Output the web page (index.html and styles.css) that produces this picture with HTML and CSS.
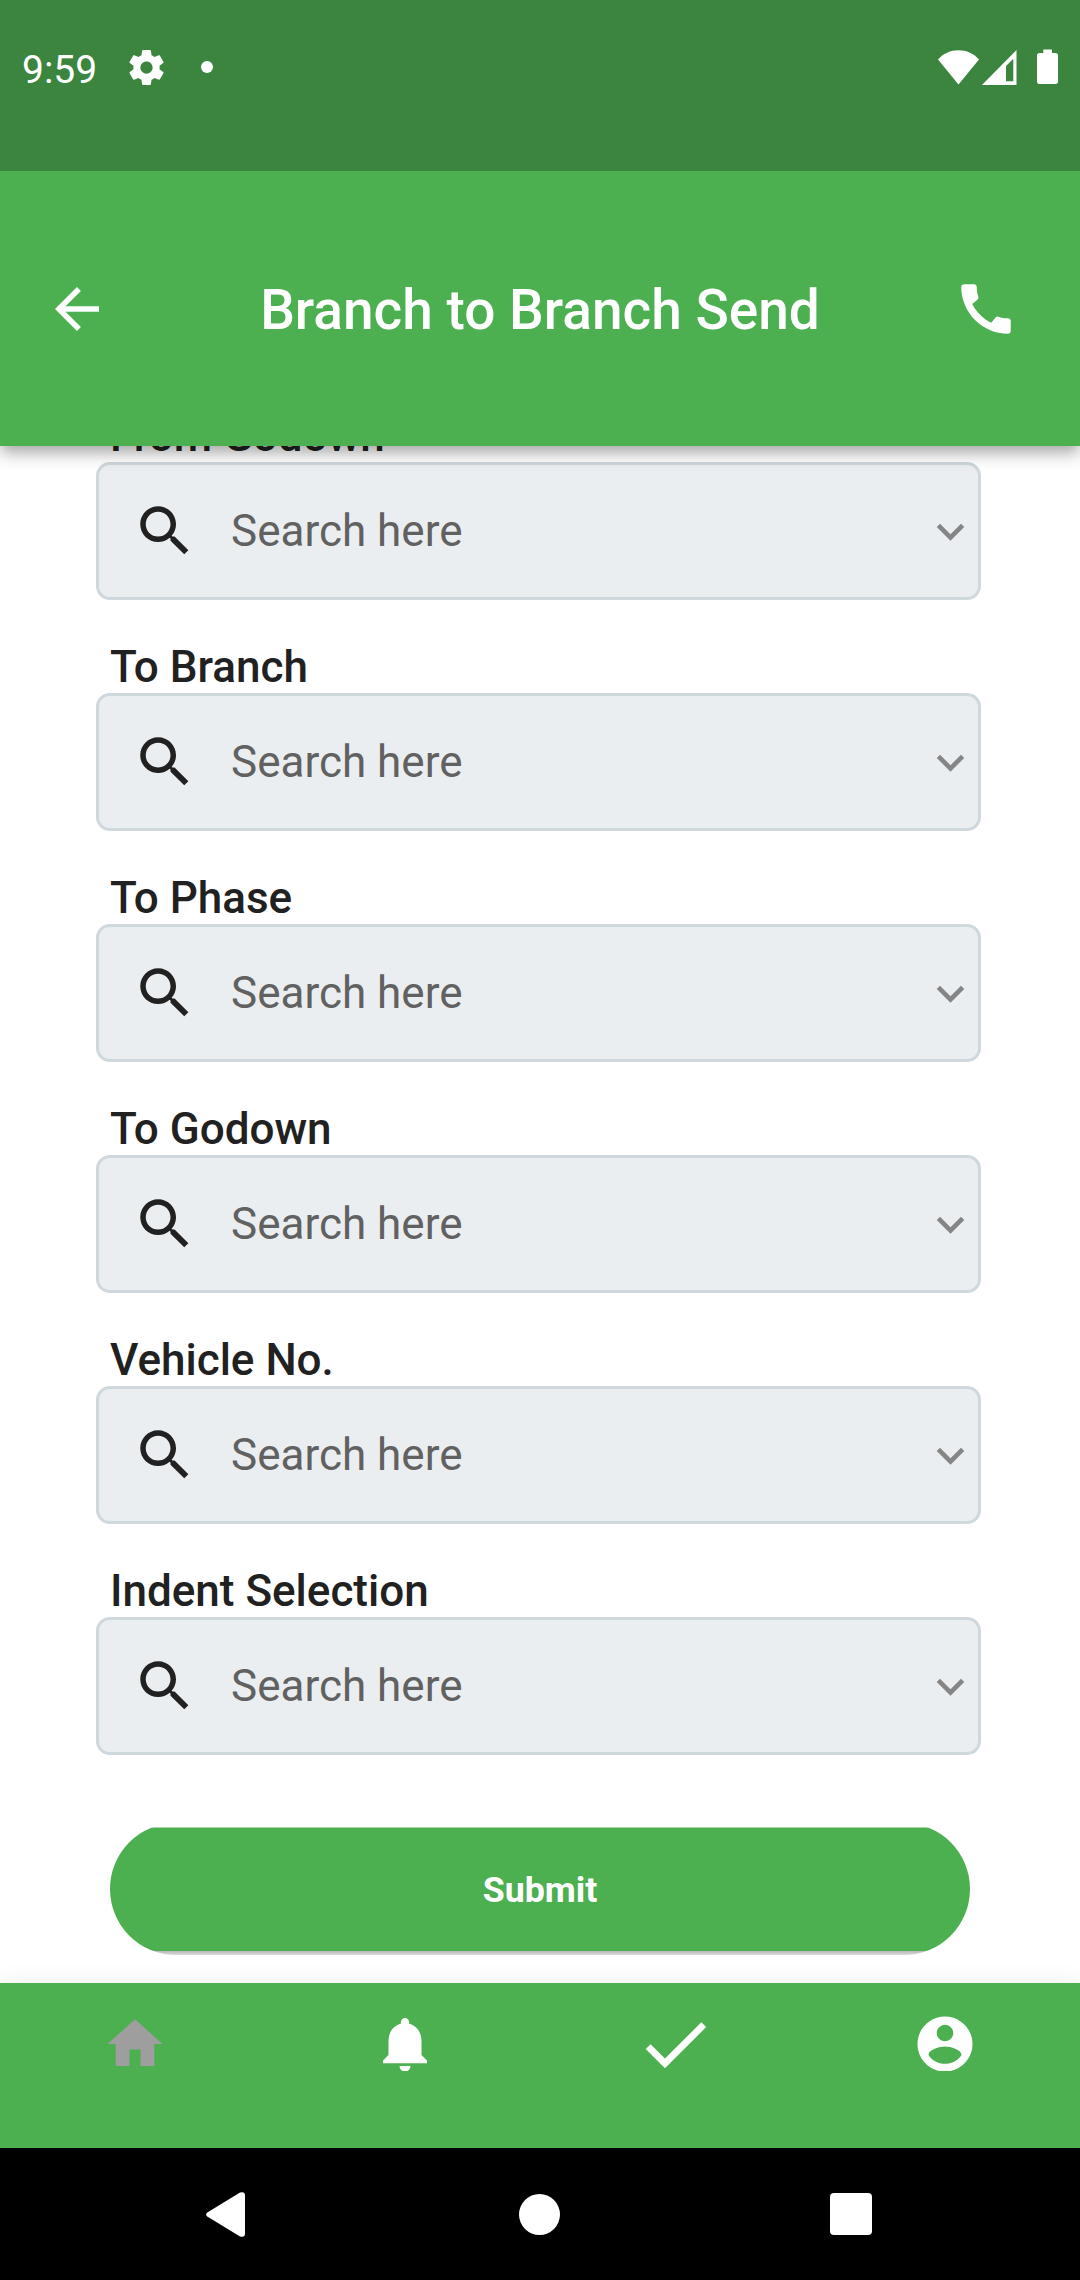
FILE: index.html
```html
<!DOCTYPE html>
<html lang="en">
<head>
<meta charset="utf-8">
<title>Branch to Branch Send</title>
<link rel="stylesheet" href="styles.css">
</head>
<body>
<svg class="symbols" aria-hidden="true">
  <symbol id="search" viewBox="0 0 24 24"><path d="M15.5 14h-.79l-.28-.27C15.41 12.59 16 11.11 16 9.5 16 5.91 13.09 3 9.5 3S3 5.91 3 9.5 5.91 16 9.5 16c1.61 0 3.09-.59 4.23-1.57l.27.28v.79l5 4.99L20.49 19l-4.99-5zm-6 0C7.01 14 5 11.99 5 9.5S7.01 5 9.5 5 14 7.01 14 9.5 11.99 14 9.5 14z"/></symbol>
  <symbol id="chevron" viewBox="0 0 24 24"><path d="M7.41 8.59L12 13.17l4.59-4.58L18 10l-6 6-6-6z"/></symbol>
</svg>
<div class="screen">
  <div class="status">
    <span class="time">9:59</span>
    <svg class="gear" viewBox="2 2 20 20"><path d="M19.43 12.98c.04-.32.07-.64.07-.98s-.03-.66-.07-.98l2.11-1.65c.19-.15.24-.42.12-.64l-2-3.46c-.12-.22-.39-.3-.61-.22l-2.49 1c-.52-.4-1.08-.73-1.69-.98l-.38-2.65C14.46 2.18 14.25 2 14 2h-4c-.25 0-.46.18-.49.42l-.38 2.65c-.61.25-1.17.59-1.69.98l-2.49-1c-.23-.09-.49 0-.61.22l-2 3.46c-.13.22-.07.49.12.64l2.11 1.65c-.04.32-.07.65-.07.98s.03.66.07.98l-2.11 1.65c-.19.15-.24.42-.12.64l2 3.46c.12.22.39.3.61.22l2.49-1c.52.4 1.08.73 1.69.98l.38 2.65c.03.24.24.42.49.42h4c.25 0 .46-.18.49-.42l.38-2.65c.61-.25 1.17-.59 1.69-.98l2.49 1c.23.09.49 0 .61-.22l2-3.46c.12-.22.07-.49-.12-.64l-2.11-1.65zM12 15.5c-1.93 0-3.5-1.57-3.5-3.5s1.57-3.5 3.5-3.5 3.5 1.57 3.5 3.5-1.57 3.5-3.5 3.5z"/></svg>
    <span class="dot"></span>
    <svg class="wifi" viewBox="0 0 41 35"><path d="M20.500 34.600L0 9.500C5 3.500 12.500.2 20.500.2S36 3.500 41 9.500z"/></svg>
    <svg class="signal" viewBox="0 0 35 35"><path fill-rule="evenodd" d="M34.500 0V35H0zM31.300 8.800L24 16V31.300h7.300z"/></svg>
    <svg class="battery" viewBox="0 0 21 36"><path d="M6.300 4V.5h8.700V4h3.500A2.500 2.500 0 0 1 21 6.500v26a2.500 2.500 0 0 1-2.500 2.500h-16A2.500 2.500 0 0 1 0 32.500v-26A2.500 2.500 0 0 1 2.500 4z"/></svg>
  </div>
  <header class="appbar">
    <svg class="icon" viewBox="0 0 24 24"><path d="M20 11H7.830l5.590-5.590L12 4l-8 8 8 8 1.410-1.410L7.830 13H20v-2z"/></svg>
    <h1>Branch to Branch Send</h1>
    <svg class="icon" viewBox="0 0 24 24"><path d="M20.010 15.380c-1.230 0-2.420-.2-3.530-.56-.35-.12-.74-.03-1.010.24l-1.570 1.970c-2.830-1.350-5.480-3.900-6.890-6.830l1.950-1.660c.27-.28.35-.67.24-1.020-.37-1.110-.56-2.300-.56-3.530 0-.54-.45-.99-.99-.99H4.190C3.650 3 3 3.240 3 3.990 3 13.280 10.730 21 20.010 21c.71 0 .99-.63.99-1.180v-3.450c0-.54-.45-.99-.99-.99z"/></svg>
  </header>
  <main class="form">
    <div class="group"><label>From Godown</label><div class="field"><svg class="icon"><use href="#search"/></svg><span>Search here</span><svg class="chevron"><use href="#chevron"/></svg></div></div>
    <div class="group"><label>To Branch</label><div class="field"><svg class="icon"><use href="#search"/></svg><span>Search here</span><svg class="chevron"><use href="#chevron"/></svg></div></div>
    <div class="group"><label>To Phase</label><div class="field"><svg class="icon"><use href="#search"/></svg><span>Search here</span><svg class="chevron"><use href="#chevron"/></svg></div></div>
    <div class="group"><label>To Godown</label><div class="field"><svg class="icon"><use href="#search"/></svg><span>Search here</span><svg class="chevron"><use href="#chevron"/></svg></div></div>
    <div class="group"><label>Vehicle No.</label><div class="field"><svg class="icon"><use href="#search"/></svg><span>Search here</span><svg class="chevron"><use href="#chevron"/></svg></div></div>
    <div class="group"><label>Indent Selection</label><div class="field"><svg class="icon"><use href="#search"/></svg><span>Search here</span><svg class="chevron"><use href="#chevron"/></svg></div></div>
    <div class="submit-wrap"><button class="submit">Submit</button></div>
  </main>
  <nav class="tabs">
    <span class="tab home"><svg class="icon" viewBox="0 0 24 24"><path d="M10 20v-6h4v6h5v-8h3L12 3 2 12h3v8z"/></svg></span>
    <span class="tab"><svg class="icon" viewBox="0 0 24 24"><path d="M12 22c1.100 0 2-.9 2-2h-4c0 1.100.89 2 2 2zm6-6v-5c0-3.070-1.640-5.640-4.500-6.320V4c0-.83-.67-1.500-1.500-1.500s-1.500.67-1.500 1.500v.68C7.630 5.360 6 7.920 6 11v5l-2 2v1h16v-1l-2-2z"/></svg></span>
    <span class="tab"><svg class="icon check" viewBox="0 0 24 24"><path d="M9 16.170L4.830 12l-1.420 1.410L9 19 21 7l-1.410-1.410z"/></svg></span>
    <span class="tab"><svg class="icon" viewBox="0 0 24 24"><path d="M12 2C6.480 2 2 6.480 2 12s4.480 10 10 10 10-4.480 10-10S17.520 2 12 2zm0 3c1.660 0 3 1.340 3 3s-1.340 3-3 3-3-1.340-3-3 1.340-3 3-3zm0 14.200c-2.500 0-4.710-1.280-6-3.220.03-1.990 4-3.080 6-3.080 1.990 0 5.970 1.090 6 3.080-1.290 1.940-3.500 3.220-6 3.220z"/></svg></span>
  </nav>
  <div class="sysnav">
    <svg class="back" viewBox="0 0 39 45"><path d="M1.300 20.500L34 .6Q39-1 39 3.500v38q0 4.500-5 2.900L1.300 24.500Q-1 22.500 1.300 20.500z"/></svg>
    <span class="circle"></span>
    <span class="square"></span>
  </div>
</div>
</body>
</html>
```
FILE: styles.css
```css
* { box-sizing: border-box; }

body {
  margin: 0;
  font-family: Roboto, "Liberation Sans", sans-serif;
  background: #fff;
}

svg { display: block; flex: none; fill: currentColor; }

.symbols { display: none; }

.screen {
  width: 1080px;
  height: 2280px;
  display: grid;
  grid-template-rows: 171px 275px 1537px 165px 132px;
  overflow: hidden;
}

.icon { width: 66px; height: 66px; }

.status {
  z-index: 2;
  display: flex;
  align-items: flex-start;
  padding: 0 22px;
  background: #3b853e;
  color: #fff;
}

.time {
  width: 108px;
  margin-top: 48px;
  font-size: 39px;
  line-height: 45px;
  white-space: nowrap;
}

.gear { width: 35px; height: 35px; margin-top: 50px; margin-left: -1px; }

.dot {
  width: 12px;
  height: 12px;
  margin: 61px auto 0 37px;
  border-radius: 50%;
  background: #fff;
}

.wifi { width: 41px; height: 35px; margin-top: 50px; }
.signal { width: 35px; height: 35px; margin: 50px 20px 0 3px; }
.battery { width: 21px; height: 36px; margin-top: 49px; }

.appbar {
  z-index: 1;
  display: flex;
  align-items: center;
  justify-content: space-between;
  padding: 0 61px 0 44px;
  background: #4caf50;
  color: #fff;
  box-shadow:
    0 5.500px 11px -2.750px rgba(0, 0, 0, .2),
    0 11px 13.750px rgba(0, 0, 0, .14),
    0 2.750px 27.500px rgba(0, 0, 0, .08);
}

.appbar h1 {
  margin: 2px 0 0 17px;
  font-size: 55px;
  font-weight: 500;
  line-height: 66px;
}

.form {
  display: flex;
  flex-direction: column;
  gap: 41px;
  overflow: hidden;
  padding: 0 99px 0 96px;
}

.group:first-child { margin-top: -36px; }

.group label {
  display: block;
  padding-left: 14px;
  font-size: 44px;
  font-weight: 500;
  line-height: 52px;
  color: #212121;
}

.field {
  display: flex;
  align-items: center;
  height: 138px;
  padding: 0 0 0 33px;
  border: 3px solid #cfd8dc;
  border-radius: 14px;
  background: #eaeef1;
  color: #212121;
}

.field span {
  flex: 1;
  padding-left: 33px;
  font-size: 44px;
  line-height: 52px;
  color: #616161;
}

.chevron { width: 55px; height: 55px; color: #858585; }

/* The pill is taller than its slot, so its top edge is cut flat. */
.submit-wrap {
  height: 128px;
  margin: 31px -3px 0 0;
  padding: 0 14px;
  overflow: hidden;
}

.submit {
  display: block;
  width: 100%;
  height: 132px;
  margin-top: -4px;
  padding: 2px 0 0;
  border: 0;
  border-radius: 66px;
  background: linear-gradient(#a6d7a7 5px, #4caf50 5px 128px, #b8b8b8 128px, #dcdcdc 132px);
  color: #fff;
  font: 700 35.750px/42px Roboto, "Liberation Sans", sans-serif;
}

.tabs {
  z-index: 1;
  display: grid;
  grid-template-columns: repeat(4, 1fr);
  align-items: start;
  background: #4caf50;
  color: #fff;
  box-shadow: 0 0 22px rgba(0, 0, 0, .08);
}

.tab {
  display: flex;
  align-items: center;
  justify-content: center;
  height: 66px;
  margin-top: 28px;
  clip-path: inset(-10px 0 6px);
}

.check { width: 82.500px; height: 82.500px; }
.home { color: #9e9e9e; }

.sysnav {
  z-index: 2;
  display: flex;
  align-items: center;
  justify-content: space-between;
  padding: 0 208px 0 206px;
  background: #000;
  color: #fff;
}

.back { width: 39px; height: 45px; }
.circle { width: 41px; height: 41px; margin-left: 4px; border-radius: 50%; background: #fff; }
.square { width: 42px; height: 42px; border-radius: 4px; background: #fff; }
```
